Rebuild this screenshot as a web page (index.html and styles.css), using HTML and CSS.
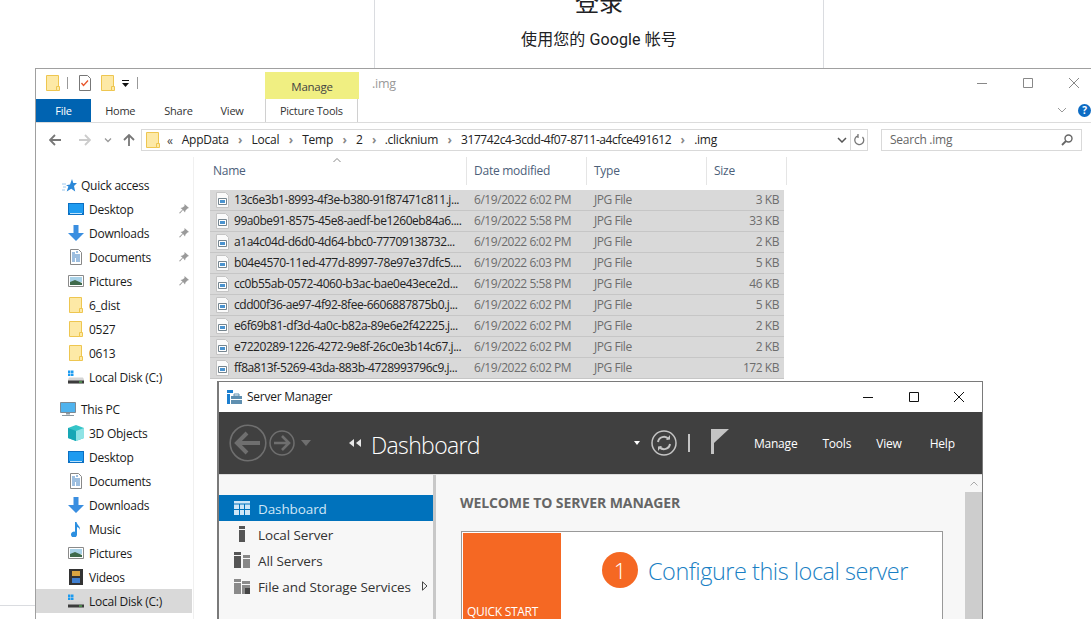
FILE: index.html
```html
<!DOCTYPE html>
<html>
    <head>
        <title>Explorer and Server Manager</title>
        <link rel="stylesheet" href="styles.css">
    </head>
    <body>
        <svg class="defs" width="0" height="0">
            <symbol id="folder" viewBox="0 0 14 16">
                <path d="M.5.5h12v15H.5z" fill="#fde9a6" stroke="#eec650"/>
                <path d="M10.500 11.500h3v4h-3z" fill="#fde9a6" stroke="#eec650"/>
            </symbol>
            <symbol id="desktop" viewBox="0 0 16 12">
                <path d="M0 0h16v12H0z" fill="#0b6fc2"/>
                <path d="M1 1h14v9H1z" fill="#1e9bf0"/>
                <path d="M2 10.500h12" stroke="#bfe3fb"/>
            </symbol>
            <symbol id="download" viewBox="0 0 16 16">
                <path d="M5.500 0h5v8H16l-8 8-8-8h5.500z" fill="#3a8ee0"/>
            </symbol>
            <symbol id="doc" viewBox="0 0 12 16">
                <path d="M.5.5h8l3 3v12H.5z" fill="#fff" stroke="#888"/>
                <path d="M2 4h3M6 3h2M2 6h8M2 8h8M2 10h3M6 10h4M2 12h3M6 12h4" stroke="#3c7fc0" fill="none"/>
            </symbol>
            <symbol id="picture" viewBox="0 0 16 12">
                <path d="M.5.5h15v11H.5z" fill="#fff" stroke="#8a8a8a"/>
                <path d="M2 2h12v5H2z" fill="#a9d2e8"/>
                <path d="M2 7l5-2 7 3v2H2z" fill="#3f6a4c"/>
            </symbol>
            <symbol id="pin" viewBox="0 0 10 10">
                <path d="M5.500 0l4.500 4-1.500.5-2 2-.5 2L4 6 1 9.500 0 9l3.500-3.500L1.500 4l2-.5 2-1.500z" fill="#9a9a9a"/>
            </symbol>
            <symbol id="disk" viewBox="0 0 16 13">
                <path d="M0 0h2.500v2.500H0zM3 0h2.500v2.500H3zM0 3h2.500v2.500H0zM3 3h2.500v2.500H3z" fill="#1d9bf0"/>
                <path d="M1 7h14l1 2v4H0V9z" fill="#d4d4d4"/>
                <path d="M0 10h16v3H0z" fill="#3c3c3c"/>
                <path d="M11 11h3v1h-3z" fill="#5fd35f"/>
            </symbol>
            <symbol id="file" viewBox="0 0 13 16">
                <path d="M.5.5h9l3 3v12H.5z" fill="#fafafa" stroke="#c4c4c4"/>
                <path d="M2.500 6.500h8v6h-8z" fill="#fff" stroke="#75858f"/>
                <path d="M4 8h5v3H4z" fill="#4a93cf"/>
            </symbol>
        </svg>

        <div class="card-lines">
            <h1>登录</h1>
            <p>使用您的 Google 帐号</p>
        </div>
        <div class="edge-line"></div>

        <section class="explorer">
            <header class="ex-title">
                <svg class="ico-folder"><use href="#folder"/></svg>
                <i class="qa-sep"></i>
                <svg class="qa-check" viewBox="0 0 12 16"><path d="M.5.5h8l3 3v12H.5z" fill="#fff" stroke="#777"/><path d="M2.500 8l2 2.500 4.500-5" fill="none" stroke="#e8552b" stroke-width="1.300"/></svg>
                <svg class="ico-folder qa-folder"><use href="#folder"/></svg>
                <svg class="qa-drop" viewBox="0 0 7 7"><path d="M0 0h7v1H0zM0 3h7L3.500 7z" fill="#111"/></svg>
                <i class="qa-sep qa-sep2"></i>
                <div class="manage">Manage</div>
                <span class="ex-name">.img</span>
                <div class="caps">
                    <svg viewBox="0 0 10 10"><path d="M0 5.500h10" stroke="#888"/></svg>
                    <svg viewBox="0 0 10 10"><path d="M.5.5h9v9h-9z" fill="none" stroke="#888"/></svg>
                    <svg viewBox="0 0 10 10"><path d="M0 0l10 10M10 0L0 10" stroke="#888"/></svg>
                </div>
            </header>
            <nav class="ribbon">
                <a class="file-tab">File</a>
                <a class="tab tab-home">Home</a>
                <a class="tab tab-share">Share</a>
                <a class="tab tab-view">View</a>
                <a class="tab-pic">Picture Tools</a>
                <svg class="rib-chev" viewBox="0 0 10 6"><path d="M1 1l4 4 4-4" fill="none" stroke="#999"/></svg>
                <span class="help">?</span>
            </nav>
            <div class="navbar">
                <svg class="nav-arrow" viewBox="0 0 12 12"><path d="M12 6H1.500M6 1L1 6l5 5" fill="none" stroke="#777" stroke-width="1.800"/></svg>
                <svg class="nav-arrow nav-fwd" viewBox="0 0 12 12"><path d="M0 6h10.500M6 1l5 5-5 5" fill="none" stroke="#ccc" stroke-width="1.800"/></svg>
                <svg class="nav-down" viewBox="0 0 8 5"><path d="M1 .5l3 3 3-3" fill="none" stroke="#999" stroke-width="1.300"/></svg>
                <svg class="nav-arrow nav-up" viewBox="0 0 12 12"><path d="M6 12V1.500M1 6l5-5 5 5" fill="none" stroke="#777" stroke-width="1.800"/></svg>
                <div class="address">
                    <svg class="ico-folder"><use href="#folder"/></svg>
                    <span class="crumb-more">«</span>
                    <span class="crumbs">
                        <span>AppData</span><b>›</b><span>Local</span><b>›</b><span>Temp</span><b>›</b><span>2</span><b>›</b><span class="crumb-dir">.clicknium</span><b>›</b><span class="crumb-id">317742c4-3cdd-4f07-8711-a4cfce491612</span><b>›</b><span>.img</span>
                    </span>
                    <svg class="addr-down" viewBox="0 0 10 6"><path d="M1 1l4 4 4-4" fill="none" stroke="#555" stroke-width="1.500"/></svg>
                    <span class="addr-refresh"><svg viewBox="0 0 12 12"><path d="M9.500 3A4.500 4.500 0 1 1 5 1.800M5 0v4" fill="none" stroke="#777" stroke-width="1.300"/></svg></span>
                </div>
                <div class="search">
                    <span>Search .img</span>
                    <svg viewBox="0 0 12 12"><circle cx="7.500" cy="4.500" r="3.500" fill="none" stroke="#666" stroke-width="1.400"/><path d="M5 7l-4 4" stroke="#666" stroke-width="1.800"/></svg>
                </div>
            </div>
            <div class="ex-body">
                <aside class="tree">
                    <div class="tree-head"><svg viewBox="0 0 15 13"><path d="M10 0l1.300 4H15l-3 3 1.200 5.500-4-2.700-4.500 2.700 1.700-5L4 6.200l4-.7z" fill="#2b88d8"/><path d="M0 5h4M1 8h3M0 11h3" stroke="#9cc8ee"/></svg>Quick access</div>
                    <div class="tree-item"><svg><use href="#desktop"/></svg>Desktop<svg class="pin"><use href="#pin"/></svg></div>
                    <div class="tree-item"><svg><use href="#download"/></svg>Downloads<svg class="pin"><use href="#pin"/></svg></div>
                    <div class="tree-item"><svg><use href="#doc"/></svg>Documents<svg class="pin"><use href="#pin"/></svg></div>
                    <div class="tree-item"><svg><use href="#picture"/></svg>Pictures<svg class="pin"><use href="#pin"/></svg></div>
                    <div class="tree-item"><svg><use href="#folder"/></svg>6_dist</div>
                    <div class="tree-item"><svg><use href="#folder"/></svg>0527</div>
                    <div class="tree-item"><svg><use href="#folder"/></svg>0613</div>
                    <div class="tree-item"><svg><use href="#disk"/></svg>Local Disk (C:)</div>
                    <div class="tree-head tree-pc"><svg viewBox="0 0 16 14"><path d="M.5.500h15v10H.5z" fill="#4fb3ee" stroke="#7d8a94"/><path d="M6 11h4v1.500H6zM2 13h12v1H2z" fill="#8c98a0"/></svg>This PC</div>
                    <div class="tree-item"><svg viewBox="0 0 16 16"><path d="M8 0l8 3v10l-8 3-8-3V3z" fill="#35c4c8"/><path d="M8 6l8-3v10l-8 3z" fill="#8fe3e5"/><path d="M0 3l8 3v10l-8-3z" fill="#17a7b5"/></svg>3D Objects</div>
                    <div class="tree-item"><svg><use href="#desktop"/></svg>Desktop</div>
                    <div class="tree-item"><svg><use href="#doc"/></svg>Documents</div>
                    <div class="tree-item"><svg><use href="#download"/></svg>Downloads</div>
                    <div class="tree-item"><svg viewBox="0 0 16 16"><path d="M7 1h1.500c.5 3 4 4 3.500 8-.5-2-1.500-2.500-3-3v7.500a3 3 0 1 1-2-2.800z" fill="#2c8fe0"/></svg>Music</div>
                    <div class="tree-item"><svg><use href="#picture"/></svg>Pictures</div>
                    <div class="tree-item"><svg viewBox="0 0 16 16"><path d="M1 0h14v16H1z" fill="#333"/><path d="M4 2h8v5H4z" fill="#d9a441"/><path d="M4 9h8v5H4z" fill="#3f7fd0"/></svg>Videos</div>
                    <div class="tree-item is-active"><svg><use href="#disk"/></svg>Local Disk (C:)</div>
                </aside>
                <main class="files">
                    <div class="sort-caret"><svg viewBox="0 0 8 4"><path d="M.5 4L4 .5 7.500 4" fill="none" stroke="#888"/></svg></div>
                    <div class="file-head">
                        <span>Name</span><span>Date modified</span><span>Type</span><span>Size</span>
                    </div>
                    <div class="file-rows">
                        <div class="file-row"><svg><use href="#file"/></svg><span class="fname">13c6e3b1-8993-4f3e-b380-91f87471c811.j...</span><span>6/19/2022 6:02 PM</span><span>JPG File</span><span class="fsize">3 KB</span></div>
                        <div class="file-row"><svg><use href="#file"/></svg><span class="fname">99a0be91-8575-45e8-aedf-be1260eb84a6....</span><span>6/19/2022 5:58 PM</span><span>JPG File</span><span class="fsize">33 KB</span></div>
                        <div class="file-row"><svg><use href="#file"/></svg><span class="fname">a1a4c04d-d6d0-4d64-bbc0-77709138732...</span><span>6/19/2022 6:02 PM</span><span>JPG File</span><span class="fsize">2 KB</span></div>
                        <div class="file-row"><svg><use href="#file"/></svg><span class="fname">b04e4570-11ed-477d-8997-78e97e37dfc5....</span><span>6/19/2022 6:03 PM</span><span>JPG File</span><span class="fsize">5 KB</span></div>
                        <div class="file-row"><svg><use href="#file"/></svg><span class="fname">cc0b55ab-0572-4060-b3ac-bae0e43ece2d...</span><span>6/19/2022 5:58 PM</span><span>JPG File</span><span class="fsize">46 KB</span></div>
                        <div class="file-row"><svg><use href="#file"/></svg><span class="fname">cdd00f36-ae97-4f92-8fee-6606887875b0.j...</span><span>6/19/2022 6:02 PM</span><span>JPG File</span><span class="fsize">5 KB</span></div>
                        <div class="file-row"><svg><use href="#file"/></svg><span class="fname">e6f69b81-df3d-4a0c-b82a-89e6e2f42225.j...</span><span>6/19/2022 6:02 PM</span><span>JPG File</span><span class="fsize">2 KB</span></div>
                        <div class="file-row"><svg><use href="#file"/></svg><span class="fname">e7220289-1226-4272-9e8f-26c0e3b14c67.j...</span><span>6/19/2022 6:02 PM</span><span>JPG File</span><span class="fsize">2 KB</span></div>
                        <div class="file-row"><svg><use href="#file"/></svg><span class="fname">ff8a813f-5269-43da-883b-4728993796c9.j...</span><span>6/19/2022 6:02 PM</span><span>JPG File</span><span class="fsize">172 KB</span></div>
                    </div>
                </main>
            </div>
        </section>

        <section class="server">
            <header class="sm-title">
                <svg class="sm-icon" viewBox="0 0 15 14"><path d="M0 0h6v3H0zM0 4h3v10H0z" fill="#1c7fd0"/><path d="M4 6h11v8H4z" fill="#5f8fb0"/><path d="M7 4h5v2H7z" fill="none" stroke="#5f8fb0"/><path d="M4 9.500h11" stroke="#fff"/></svg>
                <span>Server Manager</span>
                <div class="sm-caps">
                    <svg viewBox="0 0 10 10"><path d="M0 5.500h10" stroke="#111"/></svg>
                    <svg viewBox="0 0 10 10"><path d="M.5.5h9v9h-9z" fill="none" stroke="#111"/></svg>
                    <svg viewBox="0 0 10 10"><path d="M0 0l10 10M10 0L0 10" stroke="#111"/></svg>
                </div>
            </header>
            <div class="sm-bar">
                <svg class="sm-back" viewBox="0 0 38 38"><circle cx="19" cy="19" r="17.800" fill="none" stroke="#6f6f6f" stroke-width="1.600"/><path d="M31 19H9M18 9L8 19l10 10" fill="none" stroke="#6f6f6f" stroke-width="4"/></svg>
                <svg class="sm-fwd" viewBox="0 0 26 26"><circle cx="13" cy="13" r="12" fill="none" stroke="#6f6f6f" stroke-width="1.500"/><path d="M5 13h14M13 6l7 7-7 7" fill="none" stroke="#6f6f6f" stroke-width="2.600"/></svg>
                <i class="sm-drop"></i>
                <svg class="sm-crumb" viewBox="0 0 12 8"><path d="M5 0v8L0 4zM12 0v8L7 4z" fill="#e8e8e8"/></svg>
                <span class="sm-heading">Dashboard</span>
                <i class="sm-drop sm-drop2"></i>
                <svg class="sm-refresh" viewBox="0 0 26 26"><circle cx="13" cy="13" r="12" fill="none" stroke="#c4c4c4" stroke-width="1.500"/><path d="M7 12a6 6 0 0 1 10.500-3M19 14a6 6 0 0 1-10.500 3" fill="none" stroke="#c4c4c4" stroke-width="2"/><path d="M15 10l4-.5V5zM11 16l-4 .5V21z" fill="#c4c4c4"/></svg>
                <i class="sm-sep"></i>
                <svg class="sm-flag" viewBox="0 0 18 25"><path d="M0 0h3v25H0z" fill="#c4c4c4"/><path d="M3 0h15L3 14z" fill="#c4c4c4"/></svg>
                <a class="menu menu-manage">Manage</a>
                <a class="menu menu-tools">Tools</a>
                <a class="menu menu-view">View</a>
                <a class="menu menu-help">Help</a>
            </div>
            <div class="sm-body">
                <aside class="sm-nav">
                    <div class="sm-item is-current"><svg viewBox="0 0 16 14"><path d="M0 0h16v2.500H0zM0 3.500h5V8H0zM6 3.500h4V8H6zM11 3.500h5V8h-5zM0 9h5v5H0zM6 9h4v5H6zM11 9h5v5h-5z" fill="#cfe6f7"/></svg>Dashboard</div>
                    <div class="sm-item"><svg viewBox="0 0 16 16"><path d="M5 0h6v3H5zM5 4h6v12H5z" fill="#555"/></svg>Local Server</div>
                    <div class="sm-item"><svg viewBox="0 0 16 16"><path d="M0 0h7v3H0zM0 4h7v12H0z" fill="#555"/><path d="M9 3h7v3H9zM9 7h7v9H9z" fill="#888"/></svg>All Servers</div>
                    <div class="sm-item"><svg viewBox="0 0 16 16"><path d="M0 1h7v3H0zM0 5h7v11H0zM8 3h8v3H8zM8 7h8v9H8z" fill="#8a8a8a"/><path d="M11 10h5v6h-5z" fill="#444"/></svg>File and Storage Services<svg class="sm-more" viewBox="0 0 6 10"><path d="M.5.800L5 5 .5 9.200z" fill="none" stroke="#444"/></svg></div>
                </aside>
                <main class="sm-main">
                    <h2>WELCOME TO SERVER MANAGER</h2>
                    <div class="welcome">
                        <div class="quick"><span>QUICK START</span></div>
                        <div class="step">
                            <span class="step-num">1</span>
                            <a class="step-link">Configure this local server</a>
                        </div>
                    </div>
                </main>
                <div class="scroll">
                    <div class="scroll-up"><svg viewBox="0 0 8 5"><path d="M.5 4.500L4 1l3.500 3.500" fill="none" stroke="#aaa"/></svg></div>
                    <div class="scroll-thumb"></div>
                </div>
            </div>
        </section>
    </body>
</html>
```

FILE: styles.css
```css
html, body {
    margin: 0;
    padding: 0;
    width: 1091px;
    height: 619px;
    overflow: hidden;
    background: #fff;
}

body {
    position: relative;
    font-family: "Open Sans", "Noto Sans CJK SC", sans-serif;
    font-size: 12px;
    color: #1a1a1a;
}

svg {
    display: block;
    flex: none;
}

.defs {
    position: absolute;
}

/* page behind the windows */
.card-lines {
    position: absolute;
    left: 374px;
    top: 0;
    width: 448px;
    height: 68px;
    border-left: 1px solid #dadce0;
    border-right: 1px solid #dadce0;
    text-align: center;
    overflow: hidden;
    font-family: Roboto, "Noto Sans CJK SC", sans-serif;
    color: #202124;
}

.card-lines h1 {
    margin: -13px 0 0;
    font-size: 24px;
    line-height: 32px;
    font-weight: 400;
}

.card-lines p {
    margin: 9px 0 0;
    font-size: 16px;
    line-height: 24px;
    letter-spacing: .1px;
}

.edge-line {
    position: absolute;
    left: 0;
    top: 605px;
    width: 35px;
    border-top: 1px solid #dadce0;
}

/* explorer window */
.explorer {
    position: absolute;
    left: 35px;
    top: 68px;
    width: 1056px;
    height: 551px;
    background: #fff;
    border: 1px solid #a0a0a0;
    border-width: 1px 0 0 1px;
    box-sizing: border-box;
    letter-spacing: -.25px;
}

.ex-title {
    display: flex;
    align-items: flex-start;
    height: 30px;
}

.ico-folder {
    width: 14px;
    height: 16px;
}

.ex-title > .ico-folder {
    margin: 6px 0 0 10px;
}

.ex-title > .qa-folder {
    margin-left: 10px;
}

.qa-sep {
    width: 1px;
    height: 12px;
    margin: 8px 0 0 7px;
    background: #999;
}

.qa-sep2 {
    margin-left: 8px;
}

.qa-check {
    width: 12px;
    height: 16px;
    margin: 6px 0 0 11px;
}

.qa-drop {
    width: 7px;
    height: 7px;
    margin: 11px 0 0 7px;
}

.manage {
    width: 94px;
    height: 27px;
    margin: 3px 0 0 127px;
    background: #f0ef82;
    color: #444;
    font-size: 11.500px;
    text-align: center;
    line-height: 29px;
}

.ex-name {
    margin: 6px 0 0 13px;
    color: #999;
    font-size: 12.500px;
}

.caps {
    position: absolute;
    top: 9px;
    left: 941px;
    display: flex;
    gap: 36px;
}

.caps svg {
    width: 10px;
    height: 10px;
}

.ribbon {
    display: flex;
    height: 23px;
    border-bottom: 1px solid #dcdcdc;
    line-height: 23px;
    font-size: 11px;
    color: #333;
}

.file-tab {
    width: 56px;
    background: #0063b1;
    color: #fff;
    text-align: center;
    font-size: 11px;
}

.tab-home { margin-left: 14px; }
.tab-share { margin-left: 29px; }
.tab-view { margin-left: 28px; }

.tab-pic {
    width: 93px;
    margin-left: 21px;
    border-left: 1px solid #d0d0d0;
    border-right: 1px solid #d0d0d0;
    text-align: center;
}

.rib-chev {
    width: 10px;
    height: 6px;
    margin: 8px 0 0 699px;
}

.help {
    width: 13px;
    height: 13px;
    margin: 5px 0 0 11px;
    border-radius: 50%;
    background: #0d6cc4;
    color: #fff;
    font-weight: 700;
    font-size: 10px;
    line-height: 13px;
    text-align: center;
}

.navbar {
    display: flex;
    align-items: flex-start;
    height: 34px;
    padding-top: 6px;
    box-sizing: border-box;
}

.nav-arrow {
    width: 12px;
    height: 12px;
    margin: 5px 0 0 13px;
}

.nav-fwd { margin-left: 18px; }
.nav-up { margin-left: 11px; }

.nav-down {
    width: 8px;
    height: 5px;
    margin: 9px 0 0 13px;
}

.address {
    display: flex;
    align-items: center;
    width: 727px;
    height: 22px;
    margin-left: 6px;
    padding-left: 4px;
    box-sizing: border-box;
    border: 1px solid #d9d9d9;
}

.crumb-more {
    margin-left: 7px;
    color: #444;
}

.crumbs {
    display: flex;
    align-items: center;
    margin-left: 9px;
    padding-bottom: 1px;
    white-space: nowrap;
    color: #222;
}

.crumbs b {
    width: 23px;
    text-align: center;
    font-weight: 700;
    color: #888;
}

.crumb-dir {
    margin-left: -1px;
}

.crumb-id {
    letter-spacing: -.43px;
}

.addr-down {
    width: 10px;
    height: 6px;
    margin-left: auto;
    margin-right: 3px;
}

.addr-refresh {
    display: flex;
    align-items: center;
    justify-content: center;
    width: 16px;
    height: 100%;
    border-left: 1px solid #d9d9d9;
}

.addr-refresh svg {
    width: 12px;
    height: 12px;
}

.search {
    display: flex;
    align-items: center;
    justify-content: space-between;
    width: 201px;
    height: 22px;
    margin-left: 13px;
    padding: 0 8px;
    box-sizing: border-box;
    border: 1px solid #d9d9d9;
    color: #666;
}

.search span {
    padding-bottom: 1px;
}

.search svg {
    width: 12px;
    height: 12px;
}

.ex-body {
    display: flex;
}

.tree {
    width: 158px;
    height: 463px;
    padding-top: 16px;
    box-sizing: border-box;
    border-right: 1px solid #f0f0f0;
    flex: none;
}

.tree-head,
.tree-item {
    display: flex;
    align-items: center;
    height: 24px;
    white-space: nowrap;
}

.tree-head {
    padding-left: 26px;
}

.tree-head svg {
    width: 15px;
    height: 13px;
    margin-right: 4px;
}

.tree-pc {
    margin-top: 8px;
    padding-left: 24px;
}

.tree-pc svg {
    width: 16px;
    height: 14px;
    margin-right: 5px;
}

.tree-item {
    padding-left: 32px;
    width: 156px;
    box-sizing: border-box;
}

.tree-item > svg:first-child {
    width: 16px;
    height: 16px;
    margin-right: 5px;
}

.tree-item .pin {
    width: 10px;
    height: 10px;
    margin-left: auto;
    margin-right: 3px;
}

.is-active {
    background: #d9d9d9;
}

.files {
    position: relative;
    padding-left: 16px;
}

.sort-caret {
    position: absolute;
    left: 139px;
    top: 1px;
}

.sort-caret svg {
    width: 8px;
    height: 4px;
}

.file-head {
    display: grid;
    grid-template-columns: 257px 120px 120px 80px;
    height: 26px;
    color: #4c607a;
    line-height: 28px;
}

.file-head span {
    padding-left: 7px;
    border-right: 1px solid #e5e5e5;
}

.file-head span:first-child {
    padding-left: 3px;
}

.file-rows {
    width: 574px;
    margin-top: 7px;
}

.file-row {
    display: grid;
    grid-template-columns: 24px 233px 120px 120px 77px;
    align-items: center;
    height: 21px;
    padding-bottom: 1px;
    box-sizing: border-box;
    background: #d9d9d9;
    border-bottom: 1px solid #c6c6c6;
    color: #6d6d6d;
    letter-spacing: -.45px;
    white-space: nowrap;
}

.file-row svg {
    width: 13px;
    height: 16px;
    margin-left: 6px;
}

.file-row span {
    padding-left: 7px;
}

.file-row .fname {
    padding-left: 0;
    color: #222;
}

.file-row .fsize {
    padding: 0 5px 0 0;
    text-align: right;
}

/* server manager window */
.server {
    position: absolute;
    left: 217px;
    top: 381px;
    width: 766px;
    height: 238px;
    box-sizing: border-box;
    background: #fff;
    border: 1px solid #7a7a7a;
    border-width: 1px 1px 0 2px;
}

.sm-title {
    display: flex;
    align-items: center;
    height: 30px;
    letter-spacing: -.25px;
}

.sm-title span {
    padding-bottom: 2px;
}

.sm-icon {
    width: 15px;
    height: 14px;
    margin-left: 8px;
    margin-right: 5px;
}

.sm-caps {
    display: flex;
    gap: 35.500px;
    margin-left: auto;
    margin-right: 18px;
}

.sm-caps svg {
    width: 10px;
    height: 10px;
}

.sm-bar {
    display: flex;
    align-items: center;
    height: 62px;
    background: #404040;
    color: #fff;
}

.sm-back {
    width: 38px;
    height: 38px;
    margin-left: 10px;
}

.sm-fwd {
    width: 26px;
    height: 26px;
    margin-left: 2px;
}

.sm-drop {
    margin-left: 6px;
    border-style: solid;
    border-width: 6px 5px 0;
    border-color: #6f6f6f transparent transparent;
}

.sm-crumb {
    width: 12px;
    height: 8px;
    margin-left: 38px;
}

.sm-heading {
    margin: 3px 0 0 10px;
    font-size: 23px;
    font-weight: 300;
    letter-spacing: -.65px;
}

.sm-drop2 {
    margin-left: 154px;
    border-width: 4px 3px 0;
    border-color: #fff transparent transparent;
}

.sm-refresh {
    width: 26px;
    height: 26px;
    margin-left: 11px;
}

.sm-sep {
    width: 2px;
    height: 18px;
    margin-left: 11px;
    background: #c4c4c4;
}

.sm-flag {
    width: 18px;
    height: 25px;
    margin: -4px 0 0 21px;
}

.menu {
    letter-spacing: -.2px;
}

.menu-manage { margin-left: 25px; }
.menu-tools { margin-left: 25px; }
.menu-view { margin-left: 25px; }
.menu-help { margin-left: 28px; }

.sm-body {
    display: flex;
    height: 144px;
    border-top: 1px solid #dcdcdc;
    background: #f7f7f7;
}

.sm-nav {
    width: 214px;
    padding-top: 20px;
    border-right: 3px solid #c8c8c8;
    flex: none;
}

.sm-item {
    display: flex;
    align-items: center;
    height: 26px;
    padding-top: 2px;
    box-sizing: border-box;
    color: #333;
    font-size: 13.500px;
    letter-spacing: -.1px;
    white-space: nowrap;
}

.sm-item > svg:first-child {
    width: 16px;
    height: 16px;
    margin: -2px 8px 0 15px;
}

.sm-more {
    width: 6px;
    height: 10px;
    margin: -2px 0 0 11px;
}

.is-current {
    background: #0072bc;
    color: #cfe6f7;
}

.sm-main {
    flex: 1;
    padding-left: 24px;
}

.sm-main h2 {
    margin: 18px 0 0;
    font-size: 14px;
    line-height: 20px;
    color: #666;
    letter-spacing: -.1px;
}

.welcome {
    display: flex;
    width: 482px;
    height: 88px;
    margin: 18px 0 0 1px;
    padding: 1px 0 0 1px;
    box-sizing: border-box;
    background: #fff;
    border: 1px solid #999;
    border-bottom: 0;
}

.quick {
    display: flex;
    align-items: flex-end;
    width: 98px;
    height: 88px;
    padding-left: 4px;
    box-sizing: border-box;
    background: #f56823;
    color: #fff;
    letter-spacing: -.3px;
    line-height: 18px;
    flex: none;
}

.step {
    display: flex;
    align-items: center;
    align-self: flex-start;
    margin: 19px 0 0 41px;
}

.step-num {
    width: 36px;
    height: 36px;
    border-radius: 50%;
    background: #f56823;
    color: #fff;
    font-size: 22px;
    font-weight: 300;
    line-height: 36px;
    text-align: center;
}

.step-link {
    margin: 2px 0 0 10px;
    font-size: 23.500px;
    font-weight: 300;
    color: #1a7fc4;
    letter-spacing: -.48px;
    white-space: nowrap;
}

.scroll {
    width: 17px;
    margin-left: auto;
    flex: none;
    background: #f0f0f0;
}

.scroll-up {
    display: flex;
    align-items: center;
    justify-content: center;
    height: 17px;
    background: #f7f7f7;
}

.scroll-up svg {
    width: 8px;
    height: 5px;
}

.scroll-thumb {
    height: 127px;
    background: #cdcdcd;
}
```
